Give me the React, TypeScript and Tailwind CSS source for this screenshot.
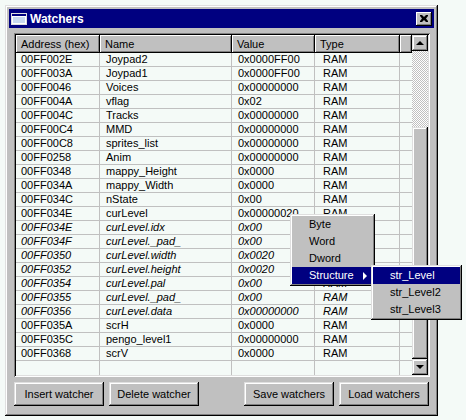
import React from 'react'

type Row = { addr: string; name: string; value: string; type: string; sub?: boolean }

const rows: Row[] = [
  { addr: '00FF002E', name: 'Joypad2', value: '0x0000FF00', type: 'RAM' },
  { addr: '00FF003A', name: 'Joypad1', value: '0x0000FF00', type: 'RAM' },
  { addr: '00FF0046', name: 'Voices', value: '0x00000000', type: 'RAM' },
  { addr: '00FF004A', name: 'vflag', value: '0x02', type: 'RAM' },
  { addr: '00FF004C', name: 'Tracks', value: '0x00000000', type: 'RAM' },
  { addr: '00FF00C4', name: 'MMD', value: '0x00000000', type: 'RAM' },
  { addr: '00FF00C8', name: 'sprites_list', value: '0x00000000', type: 'RAM' },
  { addr: '00FF0258', name: 'Anim', value: '0x00000000', type: 'RAM' },
  { addr: '00FF0348', name: 'mappy_Height', value: '0x0000', type: 'RAM' },
  { addr: '00FF034A', name: 'mappy_Width', value: '0x0000', type: 'RAM' },
  { addr: '00FF034C', name: 'nState', value: '0x00', type: 'RAM' },
  { addr: '00FF034E', name: 'curLevel', value: '0x00000020', type: 'RAM' },
  { addr: '00FF034E', name: 'curLevel.idx', value: '0x00', type: 'RAM', sub: true },
  { addr: '00FF034F', name: 'curLevel._pad_', value: '0x00', type: 'RAM', sub: true },
  { addr: '00FF0350', name: 'curLevel.width', value: '0x0020', type: 'RAM', sub: true },
  { addr: '00FF0352', name: 'curLevel.height', value: '0x0020', type: 'RAM', sub: true },
  { addr: '00FF0354', name: 'curLevel.pal', value: '0x00', type: 'RAM', sub: true },
  { addr: '00FF0355', name: 'curLevel._pad_', value: '0x00', type: 'RAM', sub: true },
  { addr: '00FF0356', name: 'curLevel.data', value: '0x00000000', type: 'RAM', sub: true },
  { addr: '00FF035A', name: 'scrH', value: '0x0000', type: 'RAM' },
  { addr: '00FF035C', name: 'pengo_level1', value: '0x00000000', type: 'RAM' },
  { addr: '00FF0368', name: 'scrV', value: '0x0000', type: 'RAM' },
]

const raised =
  'shadow-[inset_-1px_-1px_0_#000,inset_1px_1px_0_#dfdfdf,inset_-2px_-2px_0_#808080,inset_2px_2px_0_#fff]'
const raisedThin = 'shadow-[inset_-1px_-1px_0_#000,inset_1px_1px_0_#fff,inset_-2px_-2px_0_#808080]'
const sunken =
  'shadow-[inset_1px_1px_0_#808080,inset_-1px_-1px_0_#fff,inset_2px_2px_0_#000,inset_-2px_-2px_0_#dfdfdf]'

function HeaderCell({ label, w }: { label: string; w: string }) {
  return (
    <div className={`flex h-full items-center pl-[5px] ${w} ${raisedThin}`}>
      <span>{label}</span>
    </div>
  )
}

function Button({ label }: { label: string }) {
  return (
    <div className={`flex h-[24px] w-[90px] items-center justify-center bg-[#c0c0c0] ${raised}`}>{label}</div>
  )
}

function WindowIcon() {
  return (
    <svg width="16" height="12" viewBox="0 0 16 12" className="shrink-0">
      <rect x="0" y="0" width="16" height="12" fill="#dfdfdf" />
      <rect x="1" y="1" width="14" height="10" fill="#fff" />
      <rect x="1" y="1" width="14" height="2" fill="#000080" />
      <rect x="2" y="4" width="12" height="6" fill="#c8d8f0" />
    </svg>
  )
}

export default function App() {
  return (
    <div className="relative h-[420px] w-[466px] bg-[#f4faf7] p-[5px] font-['Liberation_Sans',Arial,sans-serif] text-[11px] leading-none text-black">
      <div className={`flex h-[411px] w-[433px] flex-col bg-[#c0c0c0] p-[4px] ${raised}`}>
        {/* title bar */}
        <div className="flex h-[19px] items-center bg-[#000080] pl-[2px] pr-[2px]">
          <WindowIcon />
          <span className="ml-[3px] text-[12px] font-bold text-white">Watchers</span>
          <div className={`ml-auto flex h-[14px] w-[16px] items-center justify-center bg-[#c0c0c0] ${raisedThin}`}>
            <svg width="8" height="7" viewBox="0 0 8 7">
              <path d="M0 0h2l2 2 2-2h2v1l-2 2.5 2 2.5v1h-2l-2-2-2 2h-2v-1l2-2.5-2-2.5z" fill="#000" />
            </svg>
          </div>
        </div>

        <div className="flex flex-col pl-[5px] pr-[4px] pt-[5px]">
          {/* list view */}
          <div className={`flex h-[344px] w-[416px] p-[2px] ${sunken}`}>
            <div className="flex w-[396px] flex-col bg-[#f4faf7]">
              <div className="flex h-[18px] shrink-0 bg-[#c0c0c0]">
                <HeaderCell label="Address (hex)" w="w-[84px]" />
                <HeaderCell label="Name" w="w-[132px]" />
                <HeaderCell label="Value" w="w-[83px]" />
                <HeaderCell label="Type" w="w-[85px]" />
                <div className={`h-full flex-1 ${raisedThin}`} />
              </div>
              {rows.map((r, i) => (
                <div key={i} className={`flex h-[14px] shrink-0 border-b border-[#c0c0c0] ${r.sub ? 'italic' : ''}`}>
                  <div className="flex w-[84px] items-center border-r border-[#c0c0c0] pl-[5px]">{r.addr}</div>
                  <div className="flex w-[132px] items-center border-r border-[#c0c0c0] pl-[6px]">{r.name}</div>
                  <div className="flex w-[83px] items-center border-r border-[#c0c0c0] pl-[6px]">{r.value}</div>
                  <div className="flex w-[85px] items-center border-r border-[#c0c0c0] pl-[8px]">{r.type}</div>
                  <div className="flex-1" />
                </div>
              ))}
              <div className="flex flex-1">
                <div className="w-[84px] border-r border-[#c0c0c0]" />
                <div className="w-[132px] border-r border-[#c0c0c0]" />
                <div className="w-[83px] border-r border-[#c0c0c0]" />
                <div className="w-[85px] border-r border-[#c0c0c0]" />
              </div>
            </div>

            {/* vertical scrollbar */}
            <div className="flex w-[16px] flex-col">
              <div className={`flex h-[16px] shrink-0 items-center justify-center bg-[#c0c0c0] ${raised}`}>
                <div className="h-0 w-0 border-x-[4px] border-b-[4px] border-x-transparent border-b-black" />
              </div>
              <div className="h-[76px] shrink-0 [background:repeating-conic-gradient(#c0c0c0_0_25%,#ffffff_0_50%)_0_0/2px_2px]" />
              <div className={`flex-1 bg-[#c0c0c0] ${raised}`} />
              <div className={`flex h-[16px] shrink-0 items-center justify-center bg-[#c0c0c0] ${raised}`}>
                <div className="h-0 w-0 border-x-[4px] border-t-[4px] border-x-transparent border-t-black" />
              </div>
            </div>
          </div>

          {/* buttons */}
          <div className="mt-[5px] flex w-[416px] items-center">
            <Button label="Insert watcher" />
            <div className="ml-[5px]">
              <Button label="Delete watcher" />
            </div>
            <div className="ml-auto">
              <Button label="Save watchers" />
            </div>
            <div className="ml-[5px] mr-[1px]">
              <Button label="Load watchers" />
            </div>
          </div>
        </div>
      </div>

      {/* context menu */}
      <div className={`absolute left-[290px] top-[214px] flex w-[85px] flex-col bg-[#c0c0c0] p-[2px] ${raised}`}>
        {['Byte', 'Word', 'Dword'].map((t) => (
          <div key={t} className="flex h-[17px] items-center pl-[17px]">
            {t}
          </div>
        ))}
        <div className="flex h-[17px] items-center bg-[#000080] pl-[17px] text-white">
          <span>Structure</span>
          <div className="ml-auto mr-[6px] h-0 w-0 border-y-[4px] border-l-[4px] border-y-transparent border-l-white" />
        </div>
      </div>

      {/* submenu */}
      <div className={`absolute left-[371px] top-[265px] flex w-[91px] flex-col bg-[#c0c0c0] p-[2px] ${raised}`}>
        <div className="flex h-[17px] items-center bg-[#000080] pl-[17px] text-white">str_Level</div>
        <div className="flex h-[17px] items-center pl-[17px]">str_Level2</div>
        <div className="flex h-[17px] items-center pl-[17px]">str_Level3</div>
      </div>
    </div>
  )
}
